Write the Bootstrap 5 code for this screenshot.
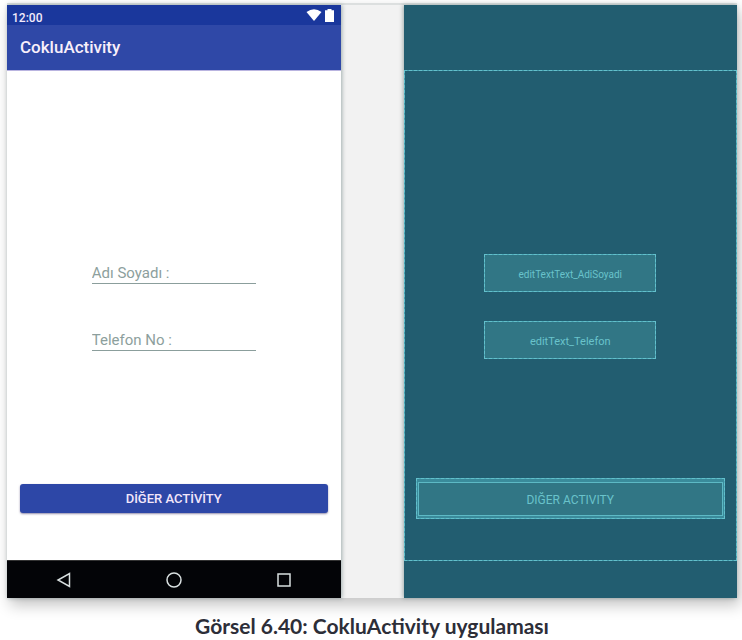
<!DOCTYPE html>
<html lang="tr">
<head>
<meta charset="utf-8">
<meta name="viewport" content="width=device-width, initial-scale=1">
<title>CokluActivity</title>
<link href="https://cdn.jsdelivr.net/npm/bootstrap@5.3.0/dist/css/bootstrap.min.css" rel="stylesheet">
<style>
body { background: #fff; font-family: Roboto, sans-serif; }
.preview-page { padding: 3px 5px 0 7px; }
.stage { background: #f2f2f2; border-top: 2px solid #dcdfdf; box-shadow: 3px 7px 14px rgba(0, 0, 0, .24); gap: 63px; }
.device { flex: 1 1 0; min-width: 0; }
.design { background: #fff; box-shadow: 1px 0 4px rgba(60, 90, 90, .45); }
.blueprint { background: #225d70; box-shadow: -1px 0 4px rgba(60, 90, 90, .45); }
.status-strip { background: #1a379c; color: #f3eafa; height: 20px; padding: 4px 5px 0 5px; font-size: 12px; line-height: 18px; font-weight: 500; }
.app-strip { background: #2f48a7; border-bottom: 1px solid #b9b4e0; color: #f8effa; height: 46px; padding: 0 13px; font-size: 17px; font-weight: 500; }
.design-body { padding: 184px 13px 47px 13px; }
.field-group { width: 164px; gap: 38px; }
.field-input { height: 29px; border: 0; border-bottom: 1px solid #8b9e9c; background: transparent; font-size: 15px; line-height: 20px; padding: 8px 0 0 0; border-radius: 0; }
.field-input::placeholder { color: #8d9f9d; opacity: 1; }
.field-input:focus { outline: 0; border-bottom: 2px solid #2f48a7; }
.main-button { margin-top: 133px; height: 29px; background: #2d47a7; color: #f3e6fa; border: 0; border-radius: 3px; font-size: 13px; line-height: 30px; font-weight: 500; padding: 0; box-shadow: 0 1px 2px rgba(40, 30, 90, .5); }
.main-button:hover { background: #263d95; color: #fff; }
.nav-strip { background: #030407; height: 38px; border-top: 1px solid #333; padding: 0 47px; }
.nav-key { background: none; border: 0; padding: 0; width: 20px; height: 20px; line-height: 0; }
.bp-top { height: 65px; }
.bp-body { border: 1px dashed #8ad6dc; outline: 1px solid rgba(86, 184, 198, .75); outline-offset: -1px; padding: 183px 11px 40px 11px; }
.bp-group { width: 172px; gap: 29px; }
.bp-box { background: #317685; border: 1px dashed #95e0e4; outline: 1px solid rgba(86, 184, 198, .8); outline-offset: -1px; color: #69c3cb; font-size: 10px; line-height: 12px; }
.bp-field { height: 38px; padding-top: 4px; }
.bp-phone { font-size: 11px; }
.bp-button { margin-top: 119px; height: 41px; padding: 3px 1px 2px 1px; background: #3a8b9b; }
.bp-inner { background: #317685; border: 1px solid #5db9c5; height: 34px; padding-top: 2px; font-size: 12px; }
.bp-foot { height: 37px; }
.figure-title { font-family: Lato, sans-serif; font-size: 21px; line-height: 24px; font-weight: 700; color: #2d2e38; margin-top: 16px; }
</style>
</head>
<body>
<main class="preview-page">
  <figure class="m-0">
    <div class="stage d-flex">
      <section class="device design d-flex flex-column" aria-label="Tasarım">
        <div class="status-strip d-flex justify-content-between">
          <span>12:00</span>
          <svg width="30" height="14" viewBox="0 0 30 14" fill="#fff" aria-hidden="true">
            <path d="M0.500 3Q8 -2.500 15.500 3L8 12Z"/>
            <path d="M19 1.200h2.500V0h4v1.200h2.500V13h-9Z"/>
          </svg>
        </div>
        <header class="app-strip d-flex align-items-center">CokluActivity</header>
        <form class="design-body d-flex flex-column align-items-center flex-grow-1">
          <div class="field-group d-flex flex-column">
            <input class="field-input w-100" type="text" aria-label="Adı Soyadı" placeholder="Adı Soyadı :">
            <input class="field-input w-100" type="tel" aria-label="Telefon No" placeholder="Telefon No :">
          </div>
          <button type="button" class="btn main-button w-100">DİĞER ACTİVİTY</button>
        </form>
        <nav class="nav-strip d-flex align-items-center justify-content-between" aria-label="Gezinme">
          <button type="button" class="nav-key" aria-label="Geri"><svg width="20" height="20" viewBox="0 0 20 20" fill="none" stroke="#d9e0e0" stroke-width="1.500"><path d="M15.500 3.500V16.500L4 10Z"/></svg></button>
          <button type="button" class="nav-key" aria-label="Ana ekran"><svg width="20" height="20" viewBox="0 0 20 20" fill="none" stroke="#d9e0e0" stroke-width="1.500"><circle cx="10" cy="10" r="7"/></svg></button>
          <button type="button" class="nav-key" aria-label="Son uygulamalar"><svg width="20" height="20" viewBox="0 0 20 20" fill="none" stroke="#d9e0e0" stroke-width="1.500"><rect x="4" y="4" width="12" height="12"/></svg></button>
        </nav>
      </section>
      <section class="device blueprint d-flex flex-column" aria-label="Şema">
        <div class="bp-top"></div>
        <div class="bp-body d-flex flex-column align-items-center flex-grow-1">
          <div class="bp-group d-flex flex-column">
            <div class="bp-box bp-field d-flex align-items-center justify-content-center">editTextText_AdiSoyadi</div>
            <div class="bp-box bp-field bp-phone d-flex align-items-center justify-content-center">editText_Telefon</div>
          </div>
          <div class="bp-box bp-button w-100">
            <div class="bp-inner d-flex align-items-center justify-content-center">DIĞER ACTIVITY</div>
          </div>
        </div>
        <div class="bp-foot"></div>
      </section>
    </div>
    <figcaption class="figure-title text-center">Görsel 6.40: CokluActivity uygulaması</figcaption>
  </figure>
</main>
<script src="https://cdn.jsdelivr.net/npm/bootstrap@5.3.0/dist/js/bootstrap.bundle.min.js"></script>
</body>
</html>
